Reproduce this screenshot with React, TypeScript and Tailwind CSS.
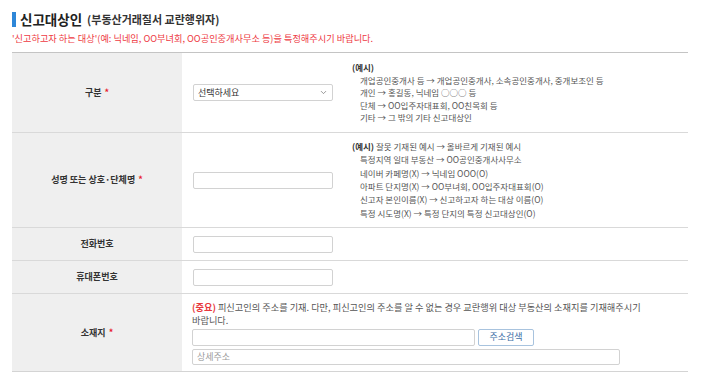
import { ChevronDown } from "lucide-react";

const font = { fontFamily: '"Noto Sans CJK KR", "Noto Sans", sans-serif' };

function Label({ text, required }: { text: string; required?: boolean }) {
  return (
    <div className="flex items-center justify-center bg-[#efefef] text-[9px] font-bold text-[#333]">
      {text}
      {required && <span className="ml-[3px] text-[#e8202a]">*</span>}
    </div>
  );
}

function TextBox({ className = "" }: { className?: string }) {
  return <div className={"h-[17px] rounded-[2px] border border-[#d2d2d2] bg-white " + className} />;
}

const typeExamples = [
  "개업공인중개사 등 → 개업공인중개사, 소속공인중개사, 중개보조인 등",
  "개인 → 홍길동, 닉네임 ○○○ 등",
  "단체 → OO입주자대표회, OO친목회 등",
  "기타 → 그 밖의 기타 신고대상인",
];

const nameExamples = [
  "특정지역 일대 부동산 → OO공인중개사사무소",
  "네이버 카페명(X) → 닉네임 OOO(O)",
  "아파트 단지명(X) → OO부녀회, OO입주자대표회(O)",
  "신고자 본인이름(X) → 신고하고자 하는 대상 이름(O)",
  "특정 시도명(X) → 특정 단지의 특정 신고대상인(O)",
];

export default function App() {
  return (
    <div className="h-[389px] w-[720px] bg-white px-[12px] pt-[11px]" style={font}>
      {/* Title */}
      <div className="flex items-center">
        <span className="h-[15px] w-[4px] bg-[#2e87d8]" />
        <span className="ml-[4px] text-[13.5px] font-bold leading-[17px] text-[#222]">신고대상인</span>
        <span className="ml-[5px] text-[11px] font-bold leading-[17px] text-[#333]">(부동산거래질서 교란행위자)</span>
      </div>
      <p className="mt-[4px] text-[9.2px] leading-[12px] text-[#ee3a43]">
        '신고하고자 하는 대상'(예: 닉네임, OO부녀회, OO공인중개사무소 등)을 특정해주시기 바랍니다.
      </p>

      {/* Form table */}
      <div className="mt-[8px] w-[676px] border-t border-[#c4c4c4]">
        <div className="grid h-[80px] grid-cols-[170px_1fr] border-b border-[#d9d9d9]">
          <Label text="구분" required />
          <div className="flex items-center pl-[11px]">
            <div className="flex h-[17px] w-[140px] items-center justify-between rounded-[2px] border border-[#d2d2d2] bg-white pl-[4px] pr-[4px] text-[9px] text-[#333]">
              선택하세요
              <ChevronDown className="h-[9px] w-[9px] text-[#777]" strokeWidth={2} />
            </div>
            <div className="ml-[19px] text-[8.5px] leading-[12.6px] text-[#555]">
              <div className="font-bold text-[#333]">(예시)</div>
              {typeExamples.map((t) => (
                <div key={t} className="pl-[8px]">
                  {t}
                </div>
              ))}
            </div>
          </div>
        </div>

        <div className="grid h-[95px] grid-cols-[170px_1fr] border-b border-[#d9d9d9]">
          <Label text="성명 또는 상호·단체명" required />
          <div className="flex items-center pl-[11px]">
            <TextBox className="w-[140px]" />
            <div className="ml-[19px] text-[8.5px] leading-[13.4px] text-[#555]">
              <div>
                <span className="font-bold text-[#333]">(예시)</span> 잘못 기재된 예시 → 올바르게 기재된 예시
              </div>
              {nameExamples.map((t) => (
                <div key={t} className="pl-[8px]">
                  {t}
                </div>
              ))}
            </div>
          </div>
        </div>

        <div className="grid h-[33px] grid-cols-[170px_1fr] border-b border-[#d9d9d9]">
          <Label text="전화번호" />
          <div className="flex items-center pl-[11px]">
            <TextBox className="w-[140px]" />
          </div>
        </div>

        <div className="grid h-[33px] grid-cols-[170px_1fr] border-b border-[#d9d9d9]">
          <Label text="휴대폰번호" />
          <div className="flex items-center pl-[11px]">
            <TextBox className="w-[140px]" />
          </div>
        </div>

        <div className="grid h-[78px] grid-cols-[170px_1fr] border-b border-[#d4d4d4]">
          <Label text="소재지" required />
          <div className="flex flex-col justify-center pl-[10px]">
            <p className="w-[460px] break-keep text-[9.2px] leading-[13.5px] text-[#555]">
              <span className="font-bold text-[#e8383d]">(중요)</span> 피신고인의 주소를 기재. 다만, 피신고인의 주소를 알 수 없는 경우 교란행위 대상 부동산의 소재지를 기재해주시기 바랍니다.
            </p>
            <div className="mt-[1px] flex items-center gap-[3px]">
              <TextBox className="w-[283px]" />
              <button className="flex h-[17px] w-[56px] items-center justify-center rounded-[2px] border border-[#a8c3de] bg-white text-[9px] text-[#3c6ea6]">
                주소검색
              </button>
            </div>
            <div className="mt-[3px] flex h-[16px] w-[428px] items-center rounded-[2px] border border-[#d2d2d2] bg-white pl-[4px] text-[9px] text-[#9a9a9a]">
              상세주소
            </div>
          </div>
        </div>
      </div>
    </div>
  );
}
